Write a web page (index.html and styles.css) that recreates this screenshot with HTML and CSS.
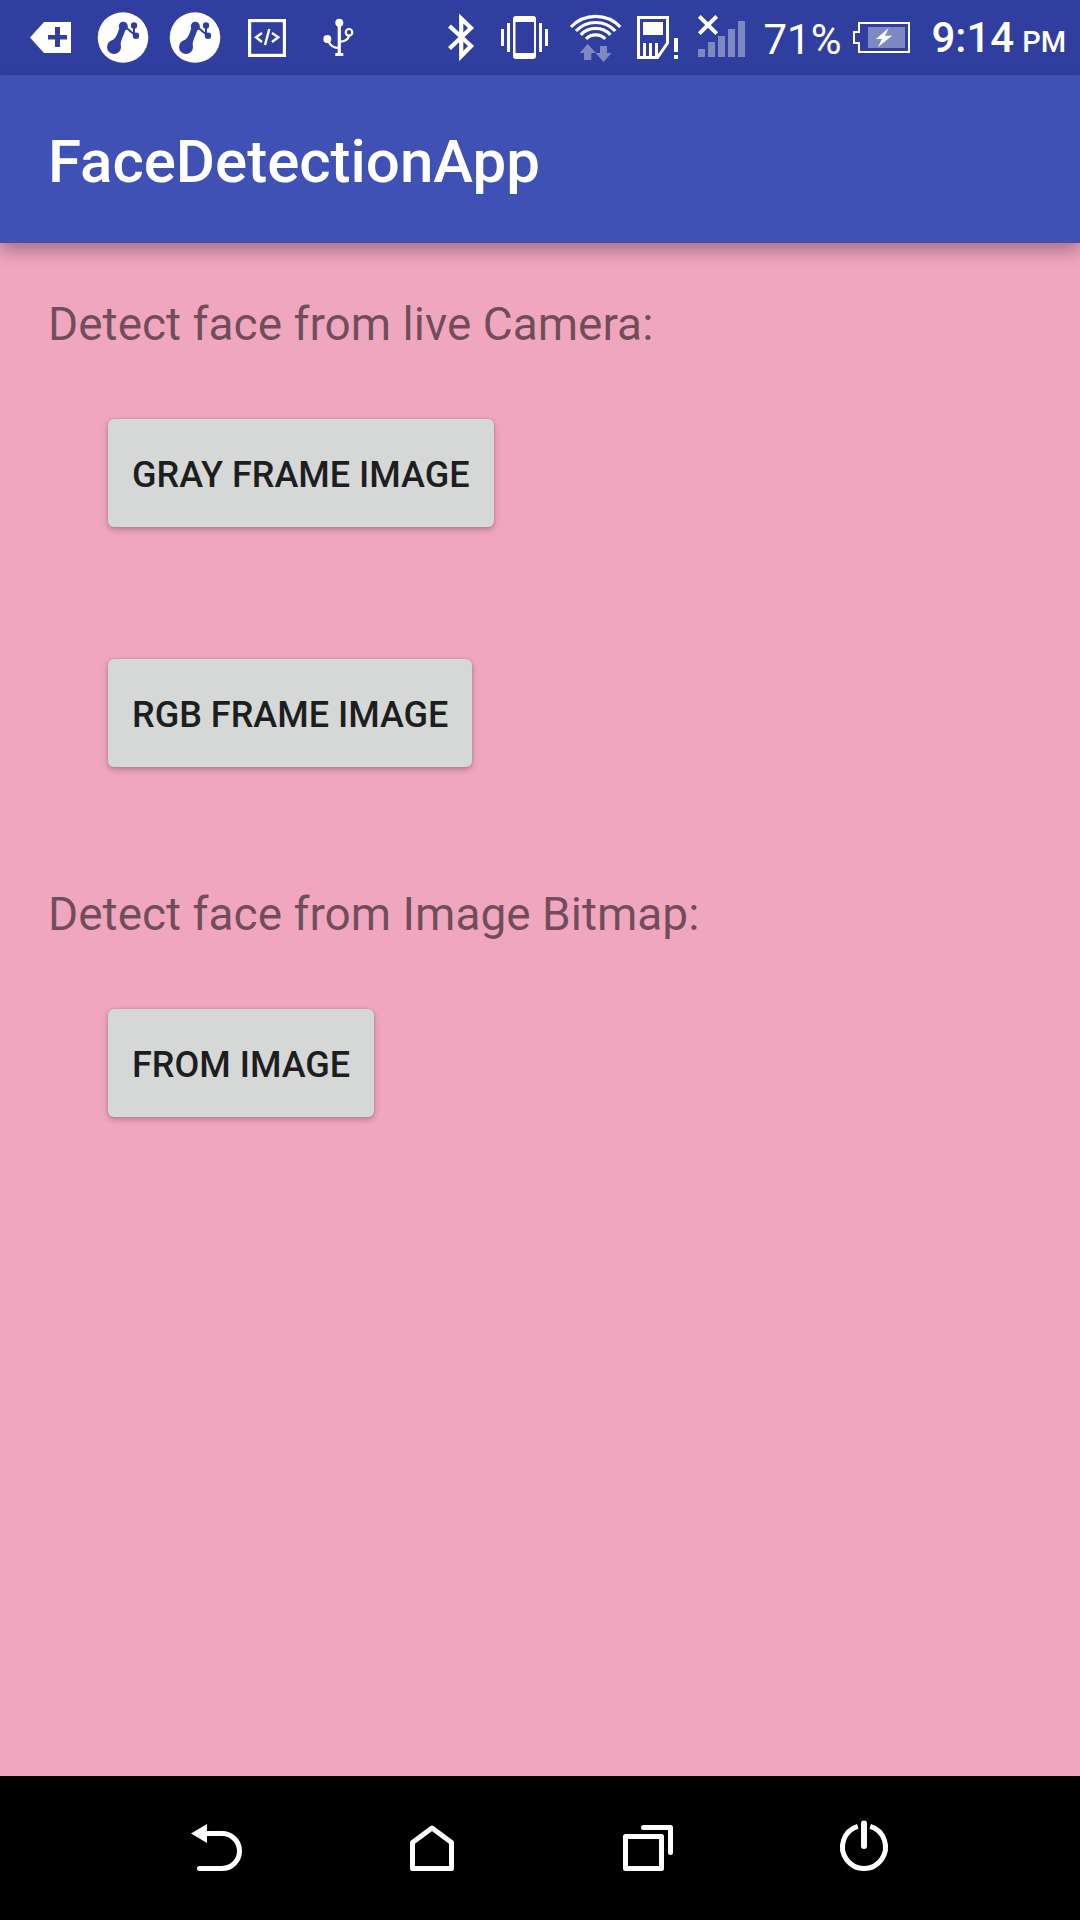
FILE: index.html
```html
<!DOCTYPE html>
<html lang="en">
<head>
<meta charset="utf-8">
<meta name="viewport" content="width=device-width, initial-scale=1">
<title>FaceDetectionApp</title>
<link rel="stylesheet" href="styles.css">
</head>
<body>
<div class="screen">
  <div class="status-bar">
    <div class="status-group">
      <svg width="72" height="75" viewBox="14 0 72 75" aria-hidden="true">
        <path fill="#fff" fill-rule="evenodd" d="M30 37.500L44 22H71V53H44ZM55 27V35H48V39.500H55V47H60V39.500H67V35H60V27Z"/>
      </svg>
      <svg width="72" height="75" viewBox="86 0 72 75" aria-hidden="true">
        <g id="arm">
          <circle cx="123" cy="37.500" r="25.300" fill="#fff"/>
          <g class="ink">
            <circle cx="123.300" cy="26.300" r="4.500"/>
            <circle cx="114" cy="47" r="7"/>
            <circle cx="134" cy="25.500" r="3.200"/>
            <circle cx="136" cy="35.700" r="3.200"/>
            <path d="M119.300 28C117.500 33 117 39 108.500 42.500L120.800 48.500C119.500 42 123 37 125.500 30Z"/>
          </g>
          <path class="ink-line" d="M126.500 28L135.500 35.500M134 26V33"/>
        </g>
      </svg>
      <svg width="72" height="75" viewBox="86 0 72 75" aria-hidden="true">
        <use href="#arm"/>
      </svg>
      <svg width="72" height="75" viewBox="230 0 72 75" aria-hidden="true">
        <g fill="none" stroke="#fff">
          <rect x="249.600" y="20.600" width="34.800" height="34.800" stroke-width="3.200"/>
          <path stroke-width="2.400" d="M262 33L256 37.300L262 42M269.300 29L265 45M272 33L278.300 37.300L272 42"/>
        </g>
      </svg>
      <svg width="72" height="75" viewBox="302 0 72 75" aria-hidden="true">
        <g fill="#fff">
          <circle cx="339.300" cy="22.700" r="4"/>
          <circle cx="327.300" cy="39" r="4"/>
          <path d="M335.300 53H343.300V56H335.300Z"/>
        </g>
        <g fill="none" stroke="#fff" stroke-width="2.200">
          <circle cx="349" cy="32.300" r="3.300"/>
          <path d="M328.500 41.500Q331.500 48 339 48M349 36Q348 41 339 42"/>
          <path stroke-width="3.200" d="M339.300 23V54"/>
        </g>
      </svg>
    </div>
    <div class="status-group">
      <svg width="54" height="75" viewBox="432 0 54 75" aria-hidden="true">
        <path fill="none" stroke="#fff" stroke-width="4.200" d="M448.500 26L470 46L460.200 56V18.500L470 28L448.500 48.500"/>
      </svg>
      <svg width="72" height="75" viewBox="486 0 72 75" aria-hidden="true">
        <path fill="#fff" fill-rule="evenodd" d="M515 16H532Q535 16 535 19V56Q535 59 532 59H515Q512 59 512 56V19Q512 16 515 16ZM514.500 22V53H533V22Z"/>
        <path fill="#fff" d="M500 29H503V46H500ZM506 23H509V52H506ZM538 23H541V52H538ZM544 29H547V46H544Z"/>
      </svg>
      <svg width="72" height="75" viewBox="558 0 72 75" aria-hidden="true">
        <path fill="none" stroke="#fff" stroke-width="3.200" d="M570 27A34 34 0 0 1 619.300 27M575 31A27 27 0 0 1 614.300 31M579.800 34.800A20.500 20.500 0 0 1 609.500 34.800M585 38.800A14 14 0 0 1 604.300 38.800"/>
        <path class="dim" d="M586.700 44L595 53H590.300V60H583V53H578.700ZM602.500 62L594.500 53H599V46H606V53H610.500Z"/>
      </svg>
      <svg width="60" height="75" viewBox="630 0 60 75" aria-hidden="true">
        <path fill="none" stroke="#fff" stroke-width="3" d="M637.500 17.500H666.500V43L656.500 57.500H637.500Z"/>
        <path fill="#fff" d="M642 22H662V35H642ZM642 43H645V57H642ZM648 43H651V57H648ZM654 43H657V57H654ZM673 38H677V52H673ZM673 55H677V59H673Z"/>
      </svg>
      <svg width="60" height="75" viewBox="690 0 60 75" aria-hidden="true">
        <path fill="none" stroke="#fff" stroke-width="4" d="M698.300 16.300L715.700 33.700M715.700 16.300L698.300 33.700"/>
        <path class="dim" d="M697 49H704V57H697ZM707 42H714V57H707ZM717 36H724V57H717ZM727 29H734V57H727ZM737 21H744V57H737Z"/>
      </svg>
      <span class="battery-level">71%</span>
      <svg width="72" height="75" viewBox="846 0 72 75" aria-hidden="true">
        <path fill="none" stroke="#fff" stroke-width="2" d="M858 23H908V52H858V43H853V32H858Z"/>
        <path class="dim" d="M867 27H904V48H867Z"/>
        <path fill="#fff" d="M887.700 28L875 39H881L877 47L891 35.700H884Z"/>
      </svg>
      <time class="clock">9:14 <span class="meridiem">PM</span></time>
    </div>
  </div>

  <header class="app-bar">
    <h1 class="app-title">FaceDetectionApp</h1>
  </header>

  <main class="content">
    <section class="group">
      <h2 class="label">Detect face from live Camera:</h2>
      <button class="button" type="button">GRAY FRAME IMAGE</button>
      <button class="button" type="button">RGB FRAME IMAGE</button>
    </section>
    <section class="group">
      <h2 class="label">Detect face from Image Bitmap:</h2>
      <button class="button" type="button">FROM IMAGE</button>
    </section>
  </main>

  <nav class="nav-bar">
    <button class="nav-button" type="button" aria-label="Back">
      <svg width="72" height="72" viewBox="0 0 72 72">
        <path fill="#fff" d="M11 21.500L27 12V31Z"/>
        <path class="nav-line" d="M26 21.500H42A17.500 17.500 0 0 1 42 56.500H19.500"/>
      </svg>
    </button>
    <button class="nav-button" type="button" aria-label="Home">
      <svg width="72" height="72" viewBox="0 0 72 72">
        <path class="nav-line" d="M36 16L55.500 30.500V56.500H16.500V30.500Z"/>
      </svg>
    </button>
    <button class="nav-button" type="button" aria-label="Recent apps">
      <svg width="72" height="72" viewBox="0 0 72 72">
        <path class="nav-line" d="M13.500 24.500H49.500V56.500H13.500ZM31.500 15.500H58.500V40.500"/>
      </svg>
    </button>
    <button class="nav-button" type="button" aria-label="Power">
      <svg width="72" height="72" viewBox="0 0 72 72">
        <path class="nav-line nav-ring" d="M42.200 14.400A21.500 21.500 0 1 1 29.800 14.400"/>
        <path class="nav-line nav-stem" d="M36 11.500V34"/>
      </svg>
    </button>
  </nav>
</div>
</body>
</html>
```
FILE: styles.css
```css
* {
  box-sizing: border-box;
}

body {
  margin: 0;
  font-family: Roboto, "Noto Sans", sans-serif;
}

svg {
  display: block;
  flex: none;
}

.screen {
  display: flex;
  flex-direction: column;
  min-height: 100vh;
  background: #f0a6bf;
}

/* Status bar */
.status-bar {
  display: flex;
  justify-content: space-between;
  padding: 0 14px;
  background: #303f9f;
  color: #fff;
}

.status-group {
  display: flex;
  align-items: center;
}

.ink {
  fill: #303f9f;
}

.ink-line {
  fill: none;
  stroke: #303f9f;
  stroke-width: 2;
}

.dim {
  fill: #fff;
  fill-opacity: 0.38;
}

.battery-level,
.clock {
  font-size: 42px;
  line-height: 48px;
  padding-top: 4px;
  white-space: nowrap;
}

.battery-level {
  margin: 0 6px 0 12px;
}

.clock {
  display: flex;
  align-items: baseline;
  gap: 8px;
  margin-left: 12px;
  font-weight: 500;
}

.meridiem {
  font-size: 29px;
}

/* App bar */
.app-bar {
  position: relative;
  display: flex;
  align-items: center;
  height: 168px;
  padding: 0 48px;
  background: #3f51b5;
  box-shadow: 0 8px 16px rgba(0, 0, 0, 0.3);
}

.app-title {
  margin: 0;
  padding-top: 6px;
  color: #fff;
  font-size: 60px;
  font-weight: 500;
  line-height: 72px;
}

/* Content */
.content {
  flex: 1;
  padding: 48px;
}

.group {
  display: flex;
  flex-direction: column;
  align-items: flex-start;
  margin-bottom: 114px;
}

.label {
  margin: 0 0 62px;
  color: rgba(0, 0, 0, 0.54);
  font-size: 46px;
  font-weight: 400;
  line-height: 66px;
}

.button {
  height: 108px;
  margin-left: 60px;
  padding: 4px 24px 0;
  border: 0;
  border-radius: 6px;
  background: #d6d8d7;
  box-shadow: 0 3px 6px rgba(0, 0, 0, 0.22), 0 0 3px rgba(0, 0, 0, 0.15);
  color: #1d1e1e;
  font-family: inherit;
  font-size: 36px;
  font-weight: 500;
  line-height: 48px;
}

.button + .button {
  margin-top: 132px;
}

/* Navigation bar */
.nav-bar {
  display: flex;
  height: 144px;
  padding: 0 10%;
  background: #000;
}

.nav-button {
  display: flex;
  flex: 1;
  align-items: center;
  justify-content: center;
  padding: 0;
  border: 0;
  background: none;
}

.nav-line {
  fill: none;
  stroke: #fff;
  stroke-width: 5;
  stroke-linecap: round;
  stroke-linejoin: round;
}

.nav-ring {
  stroke-linecap: butt;
}

.nav-stem {
  stroke-width: 6;
}
```
